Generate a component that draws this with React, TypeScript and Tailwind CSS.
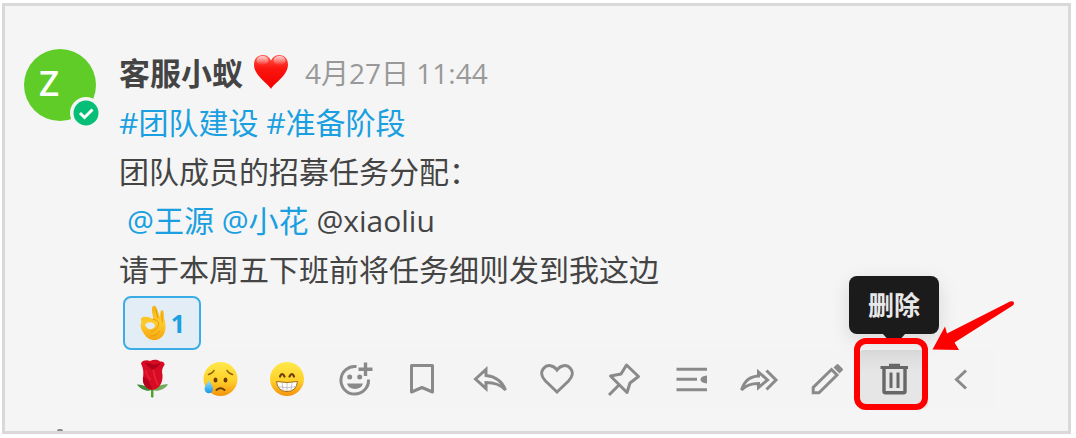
import type { ReactNode } from "react";

const fontStack = "font-['Open_Sans','Noto_Sans_CJK_SC',sans-serif]";

function Icon({ children, className = "" }: { children: ReactNode; className?: string }) {
  return (
    <svg
      viewBox="0 0 40 40"
      fill="none"
      stroke="currentColor"
      strokeWidth="3"
      className={`h-10 w-10 shrink-0 ${className}`}
      aria-hidden="true"
    >
      {children}
    </svg>
  );
}

function HeartEmoji() {
  return (
    <svg viewBox="0 0 36 36" className="h-9 w-9" aria-hidden="true">
      <defs>
        <linearGradient id="heart" x1="0" y1="0" x2="0" y2="1">
          <stop offset="0" stopColor="#ff5a50" />
          <stop offset="0.4" stopColor="#fb150f" />
          <stop offset="1" stopColor="#f20000" />
        </linearGradient>
        <linearGradient id="heartShine" x1="0" y1="0" x2="0" y2="1">
          <stop offset="0" stopColor="#fff" stopOpacity="0.75" />
          <stop offset="1" stopColor="#fff" stopOpacity="0" />
        </linearGradient>
      </defs>
      <path d="M18 35C15 29 1 22 1 10.500C1 4.500 5 1 9.500 1C13.500 1 16.500 3 18 6.500C19.500 3 22.500 1 26.500 1C31 1 35 4.500 35 10.500C35 22 21 29 18 35Z" fill="url(#heart)" />
      <ellipse cx="9.500" cy="6.500" rx="6" ry="4.500" fill="url(#heartShine)" />
      <ellipse cx="26.500" cy="6.500" rx="6" ry="4.500" fill="url(#heartShine)" />
    </svg>
  );
}

function RoseEmoji() {
  return (
    <Icon>
      <g stroke="none">
        <path d="M4 25.500C9 25 14 27.500 18.500 31C15 33 8 31 4 25.500Z" fill="#3f8a3a" />
        <path d="M35 25.500C30 24.500 24 27 19.500 31C24 33 31 31 35 25.500Z" fill="#72a95a" />
        <path d="M18 29H20.500V37.500Q19.200 40 18 37.500Z" fill="#4fa32f" />
        <path d="M8 4.500C9 1 14 .5 17 2C21 0 25 .5 27 2.500C30 2 32 4 31.500 6C29 9 28.500 12 29.500 16C30 24 26 30.500 19 31C13 30.500 9.500 25 10 19C10.500 14 11 11 8 4.500Z" fill="#d80b25" />
        <path d="M10 18C14 19 17 23 19 30.500C13 30 9 25 10 18Z" fill="#b4001c" />
        <path d="M12 4C15 7 16 9 20 10.500C24 9 26 6 28 3.500C25 4.500 23 6 20 5.500C17 5 15 3 12 4Z" fill="#b0001c" />
        <path d="M20 11C22 15 21 20 25 26" stroke="#e82439" strokeWidth="1.500" fill="none" />
        <path d="M13 11C13 15 15 18 18 21" stroke="#e82439" strokeWidth="1.200" fill="none" />
      </g>
    </Icon>
  );
}

function FaceDefs() {
  return (
    <svg className="absolute h-0 w-0" aria-hidden="true">
      <defs>
        <linearGradient id="face" x1="0" y1="0" x2="0" y2="1">
          <stop offset="0" stopColor="#ffe94a" />
          <stop offset="0.55" stopColor="#ffd02a" />
          <stop offset="1" stopColor="#f5920c" />
        </linearGradient>
        <linearGradient id="drop" x1="0" y1="0" x2="0" y2="1">
          <stop offset="0" stopColor="#9be4fb" />
          <stop offset="1" stopColor="#1798e8" />
        </linearGradient>
      </defs>
    </svg>
  );
}

function SadEmoji() {
  return (
    <Icon>
      <g stroke="none">
        <circle cx="20.500" cy="20" r="17" fill="url(#face)" />
        <ellipse cx="15.500" cy="21" rx="2" ry="2.600" fill="#6b3c06" />
        <ellipse cx="25.500" cy="21" rx="2" ry="2.600" fill="#6b3c06" />
      </g>
      <g stroke="#94600a" strokeWidth="1.600" strokeLinecap="round">
        <path d="M8.500 15.500Q12.500 14.500 14 11.500" />
        <path d="M32.500 15.500Q28.500 14.500 27 11.500" />
        <path d="M16.500 31Q20.500 27.500 24.500 31" stroke="#6b3c06" strokeWidth="2" />
      </g>
      <path d="M9 21C11 25 13 27 13 30A4.200 4.200 0 0 1 4.600 30C4.600 27 7 25 9 21Z" fill="url(#drop)" stroke="none" />
    </Icon>
  );
}

function GrinEmoji() {
  return (
    <Icon>
      <circle cx="20" cy="20" r="17" fill="url(#face)" stroke="none" />
      <g stroke="#6b3c06" strokeWidth="2.200" strokeLinecap="round">
        <path d="M13 17.500Q15 12.500 17.500 17.500" />
        <path d="M22.500 17.500Q25 12.500 27 17.500" />
      </g>
      <path d="M9.500 22.500Q20 24.500 30.500 22.500Q29.500 32.500 20 32.500Q10.500 32.500 9.500 22.500Z" fill="#fff" stroke="#a86a10" strokeWidth="1" />
      <path d="M10.500 27.500Q20 30 29.500 27.500M15 23.500L16 31.500M20 24V32M25 23.500L24 31.500" stroke="#b5b5b5" strokeWidth="0.800" />
    </Icon>
  );
}

function OkHandEmoji() {
  return (
    <svg viewBox="0 0 30 40" className="h-[38px] w-7" aria-hidden="true">
      <defs>
        <linearGradient id="hand" x1="0" y1="0" x2="0" y2="1">
          <stop offset="0" stopColor="#f5b313" />
          <stop offset="0.5" stopColor="#ffcb2c" />
          <stop offset="1" stopColor="#f5a60d" />
        </linearGradient>
      </defs>
      <path
        fillRule="evenodd"
        fill="url(#hand)"
        d="M2 15C4 12.500 8 13 12 14.500L15 16C15.500 12 13 8 14 4C14.500 1 17.500 .8 18.500 3.500C20 7 21.500 11 22.500 14L23 8C23.500 5.500 26.500 5.700 26.500 8.500C26.700 13 27 16 28 19C29.500 28 27 34 22 37C17 39.500 11 38.500 7.500 34.500C5 31.500 2.500 28 1.500 23C2.500 21 2.500 18 2 15ZM6.500 21.500C7.500 25 10 27 13.500 26.500C16 26 17.500 24 17 22C14.500 18.500 10 18.500 6.500 21.500Z"
      />
      <path d="M15 16C19 16.500 22 19 21 22C20 26 17 28.500 13 29M18 5L20 14M24.500 9.500L25 19M13 34Q19 34 22 29" fill="none" stroke="#e09a10" strokeWidth="1" strokeLinecap="round" />
    </svg>
  );
}

const actions: { label: string; icon: ReactNode }[] = [
  { label: "玫瑰", icon: <RoseEmoji /> },
  { label: "难过", icon: <SadEmoji /> },
  { label: "大笑", icon: <GrinEmoji /> },
  {
    label: "添加表情",
    icon: (
      <Icon>
        <path d="M21.500 7.600A13.800 13.800 0 1 0 33.500 20.500" />
        <path d="M30.500 3.500V17M23.500 10.300H37.500" strokeWidth="3.400" />
        <circle cx="14.700" cy="18" r="2.500" fill="currentColor" stroke="none" />
        <circle cx="24.700" cy="18" r="2.500" fill="currentColor" stroke="none" />
        <path d="M12 24.500H28A8.200 7 0 0 1 12 24.500Z" fill="currentColor" stroke="none" />
      </Icon>
    ),
  },
  { label: "收藏", icon: <Icon><path d="M9.500 6.500H30.500V33L20 28.500L9.500 33Z" strokeLinejoin="round" /></Icon> },
  {
    label: "回复",
    icon: <Icon><path d="M5.500 20L16 10.500V16.500C26 17.500 32 22 35.500 31C30 25.500 25 23.500 16 23.500V29.500Z" /></Icon>,
  },
  {
    label: "喜欢",
    icon: (
      <Icon>
        <path d="M20 33L8.500 22C4.500 18 3.500 13 6.500 9.500C10.500 5 16.500 6 20 11C23.500 6 29.500 5 33.500 9.500C36.500 13 35.500 18 31.500 22Z" />
      </Icon>
    ),
  },
  {
    label: "置顶",
    icon: (
      <Icon>
        <path d="M22.500 6L34.500 17.500L26 24L23 33.500L6.500 17L17 15Z" strokeLinejoin="round" />
        <path d="M5 36L15 26" />
      </Icon>
    ),
  },
  {
    label: "话题",
    icon: (
      <Icon>
        <path d="M4.500 10.300H35M4.500 20.300H25M4.500 30.700H35" />
        <path d="M35 16.500V24.500Q28.500 24 28.500 20.500Q28.500 17 35 16.500Z" fill="currentColor" stroke="none" />
      </Icon>
    ),
  },
  {
    label: "转发",
    icon: (
      <Icon>
        <path d="M2.500 31C6 21 11 17.500 19.500 17V13L28.500 21L19.500 28.500V24.500C11 24.500 7 26.500 2.500 31Z" />
        <path d="M27.500 11.500L37 21L27.500 30.500" />
      </Icon>
    ),
  },
  {
    label: "编辑",
    icon: (
      <Icon>
        <path d="M6.200 33.800V28.500L24.500 10.500L30 16L12 33.800Z" />
        <path d="M26.500 8.500L29.500 5.500Q30.500 4.500 31.500 5.500L35.500 9.500Q36.500 10.500 35.500 11.500L32.500 14.500Z" fill="currentColor" stroke="none" />
      </Icon>
    ),
  },
  {
    label: "删除",
    icon: (
      <Icon className="text-[#676767]">
        <path d="M6.500 8.500H34M15 6.200H26" />
        <path d="M10 8V32.500Q10 33.800 11.500 33.800H29.500Q31 33.800 31 32.500V8" strokeWidth="3.400" />
        <path d="M17 13.500V29M24 13.500V29" />
      </Icon>
    ),
  },
  { label: "收起", icon: <Icon><path d="M25 11.500L15.500 20.500L25 29.500" /></Icon> },
];

function DeleteHint() {
  return (
    <>
      <span
        role="tooltip"
        className="absolute bottom-[74px] left-1/2 flex h-[58px] w-[90px] -translate-x-1/2 items-center justify-center rounded-lg bg-[#1b1b1b] text-[26px] font-bold text-[#e8e8e8] shadow-[0_6px_20px_rgba(0,0,0,0.12)]"
      >
        删除
        <svg viewBox="0 0 22 8" className="absolute top-full h-2 w-[22px]" aria-hidden="true">
          <path d="M0 0H22L15 8H7Z" fill="#1b1b1b" />
        </svg>
      </span>
      <span className="absolute -top-3 -bottom-0.5 left-1/2 w-[74px] -translate-x-10 rounded-xl border-[6px] border-[#fe0000]" />
      <svg viewBox="0 0 84 52" className="absolute -top-[50px] left-full ml-1 h-[52px] w-[84px]" aria-hidden="true">
        <path d="M0.500 49.500L13 26.500L15 33.500L78 1.500Q81 .5 82 2.500Q82.500 4.500 80 6L22.500 42.500L27 50Z" fill="#fe0000" />
      </svg>
    </>
  );
}

function Toolbar() {
  return (
    <div className="flex h-[58px] max-w-[876px] rounded bg-[#f4f4f4] text-[#8a8a8a]">
      {actions.map((action) => {
        const active = action.label === "删除";
        return (
          <div key={action.label} className="relative min-w-0 flex-1">
            <button
              type="button"
              aria-label={action.label}
              className={`flex h-full w-full items-center justify-center ${
                active ? "rounded bg-linear-to-b from-[#dadada] to-[#e6e6e6] to-40%" : ""
              }`}
            >
              {action.icon}
            </button>
            {active && <DeleteHint />}
          </div>
        );
      })}
    </div>
  );
}

function Avatar() {
  return (
    <div className="relative flex h-[72px] w-[72px] shrink-0 items-center rounded-full bg-[#60cc28] pl-[15px] pb-1 text-[35px] font-semibold text-white">
      Z
      <svg viewBox="0 0 32 32" className="absolute -right-[6px] -bottom-[8px] h-8 w-8" aria-hidden="true">
        <circle cx="16" cy="16" r="16" fill="#f5f5f5" />
        <circle cx="16" cy="16" r="12.500" fill="#06be76" />
        <path d="M10 16L14.500 20.500L22.500 12.500" fill="none" stroke="#fff" strokeWidth="3" />
      </svg>
    </div>
  );
}

export default function App() {
  return (
    <div className={`bg-white pt-[3px] pr-[5px] pb-1 pl-0.5 ${fontStack}`}>
      <main className="relative overflow-hidden border-[3px] border-[#d9d9d9] bg-[#f5f5f5] pb-[23px]">
        <FaceDefs />
        <article className="flex gap-[23px] pt-[43px] pr-6 pl-[19px]">
          <Avatar />
          <div className="min-w-0 flex-1 text-[30px] leading-[49px] text-[#444]">
            <header className="flex h-[49px] items-center">
              <strong className="text-[31px] font-bold">客服小蚁</strong>
              <span className="mb-1 ml-2.5">
                <HeartEmoji />
              </span>
              <time className="ml-4 text-[28px] text-[#999]">4月27日 11:44</time>
            </header>
            <p className="text-[#1a9fe0]">
              <a href="#team">#团队建设</a> <a href="#prepare">#准备阶段</a>
            </p>
            <p>团队成员的招募任务分配：</p>
            <p className="pl-2">
              <a href="#wangyuan" className="text-[#1a9fe0]">@王源</a>{" "}
              <a href="#xiaohua" className="text-[#1a9fe0]">@小花</a> @xiaoliu
            </p>
            <p>请于本周五下班前将任务细则发到我这边</p>
            <button
              type="button"
              className="mt-0.5 ml-1 flex h-[54px] w-[78px] items-center justify-center gap-1 rounded-lg border-2 border-[#3aaee4] bg-[#e3edf5] text-[25px] font-bold text-[#1a9fe0]"
            >
              <OkHandEmoji />
              1
            </button>
            <Toolbar />
          </div>
        </article>
        <span className="absolute bottom-0 left-[52px] h-0.5 w-1.5 rounded-t-sm bg-[#8a8a8a]" />
      </main>
    </div>
  );
}
